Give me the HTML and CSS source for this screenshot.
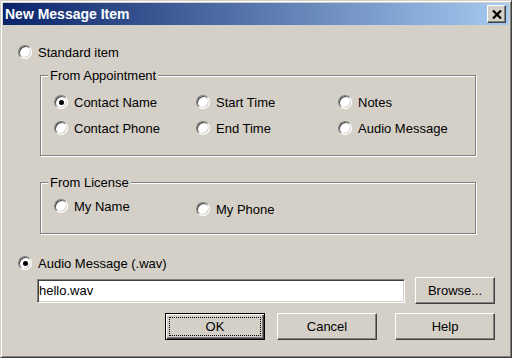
FILE: index.html
```html
<!DOCTYPE html>
<html lang="en">
<head>
  <meta charset="UTF-8">
  <title>New Message Item</title>
  <link rel="stylesheet" href="styles.css">
</head>
<body>
  <div class="window">
    <div class="titlebar">
      <span class="title">New Message Item</span>
      <button class="close">
        <svg width="10" height="9" viewBox="0 0 10 9">
          <path d="M1 0.5 L9 8.5 M9 0.5 L1 8.5" stroke="#000" stroke-width="2.2"/>
        </svg>
      </button>
    </div>

    <div class="body">
      <label class="option standard"><span class="radio"></span>Standard item</label>

      <fieldset class="group appt">
        <legend>From Appointment</legend>
        <div class="grid">
          <label class="option"><span class="radio checked"></span>Contact Name</label>
          <label class="option"><span class="radio"></span>Start Time</label>
          <label class="option"><span class="radio"></span>Notes</label>
          <label class="option"><span class="radio"></span>Contact Phone</label>
          <label class="option"><span class="radio"></span>End Time</label>
          <label class="option"><span class="radio"></span>Audio Message</label>
        </div>
      </fieldset>

      <fieldset class="group license">
        <legend>From License</legend>
        <div class="grid">
          <label class="option"><span class="radio"></span>My Name</label>
          <label class="option phone"><span class="radio"></span>My Phone</label>
        </div>
      </fieldset>

      <label class="option audio"><span class="radio checked"></span>Audio Message (.wav)</label>

      <div class="file-row">
        <input type="text" class="field" value="hello.wav">
        <button class="btn browse">Browse...</button>
      </div>

      <div class="actions">
        <button class="btn default"><span class="focus">OK</span></button>
        <button class="btn cancel">Cancel</button>
        <button class="btn help">Help</button>
      </div>
    </div>
  </div>
</body>
</html>
```

FILE: styles.css
```css
* {
  box-sizing: border-box;
}

body {
  margin: 0;
  font-family: "Liberation Sans", Arial, sans-serif;
  font-size: 13px;
  color: #000;
  background: #d4d0c8;
}

.window {
  width: 512px;
  height: 358px;
  background: #d4d0c8;
  border: 1px solid;
  border-color: #d4d0c8 #404040 #404040 #d4d0c8;
  box-shadow: inset 1px 1px #fff, inset -1px -1px #808080;
  padding: 2px;
}

/* title bar */
.titlebar {
  height: 22px;
  display: flex;
  align-items: center;
  justify-content: space-between;
  padding: 0 3px 0 2px;
  background: linear-gradient(to right, #0a246a, #a6caf0);
}

.title {
  color: #fff;
  font-weight: bold;
  font-size: 14px;
}

.close {
  width: 19px;
  height: 18px;
  padding: 0;
  display: flex;
  align-items: center;
  justify-content: center;
  background: #d4d0c8;
  border: 1px solid;
  border-color: #fff #404040 #404040 #fff;
  box-shadow: inset -1px -1px #808080;
}

/* radio options */
.option {
  display: flex;
  align-items: center;
  gap: 6px;
  height: 16px;
  line-height: 15px;
  white-space: nowrap;
}

.radio {
  position: relative;
  width: 14px;
  height: 14px;
  flex: none;
  border-radius: 50%;
  background: #fff;
  border: 1px solid;
  border-color: #808080 #fff #fff #808080;
  box-shadow: inset 1px 1px #404040, inset -1px -1px #d4d0c8;
}

.radio.checked::after {
  content: "";
  position: absolute;
  left: 3.5px;
  top: 3.5px;
  width: 5px;
  height: 5px;
  border-radius: 50%;
  background: #000;
}

.standard {
  margin: 19px 0 0 15px;
}

/* group boxes */
.group {
  margin: 0 0 0 37px;
  width: 436px;
  min-width: 0;
  padding: 0;
  border: 1px solid #808080;
  box-shadow: 1px 1px 0 #fff, inset 1px 1px 0 #fff;
}

.group legend {
  margin-left: 7px;
  padding: 0 2px;
  line-height: 15px;
  background: #d4d0c8;
}

.grid {
  display: grid;
  grid-template-columns: 142px 142px auto;
  align-items: start;
  margin-left: 13px;
}

.appt {
  margin-top: 8px;
  padding: 11px 0 19px;
}

.appt .grid {
  row-gap: 10px;
}

.license {
  margin-top: 19px;
  padding: 8px 0 16px;
}

.license .phone {
  margin-top: 3px;
}

.audio {
  margin: 21px 0 0 15px;
}

/* file row */
.file-row {
  display: flex;
  align-items: center;
  gap: 10px;
  height: 27px;
  margin: 6px 0 0 34px;
}

.field {
  width: 368px;
  height: 24px;
  margin: 0;
  padding: 0 1px;
  font: inherit;
  background: #fff;
  border: 1px solid;
  border-color: #808080 #fff #fff #808080;
  box-shadow: inset 1px 1px #404040, inset -1px -1px #d4d0c8;
  outline: none;
}

/* buttons */
.btn {
  height: 27px;
  padding: 0;
  font: inherit;
  color: #000;
  background: #d4d0c8;
  border: 1px solid;
  border-color: #fff #404040 #404040 #fff;
  box-shadow: inset -1px -1px #808080;
}

.browse {
  width: 80px;
}

.actions {
  display: flex;
  margin: 9px 0 0 162px;
}

.actions .btn {
  width: 100px;
}

.cancel {
  margin-left: 12px;
}

.help {
  margin-left: 18px;
}

.btn.default {
  border: 1px solid #000;
  box-shadow: inset 1px 1px #fff, inset -1px -1px #404040, inset -2px -2px #808080;
  padding: 3px;
}

.focus {
  display: flex;
  align-items: center;
  justify-content: center;
  height: 100%;
  border: 1px dotted #000;
}
```
